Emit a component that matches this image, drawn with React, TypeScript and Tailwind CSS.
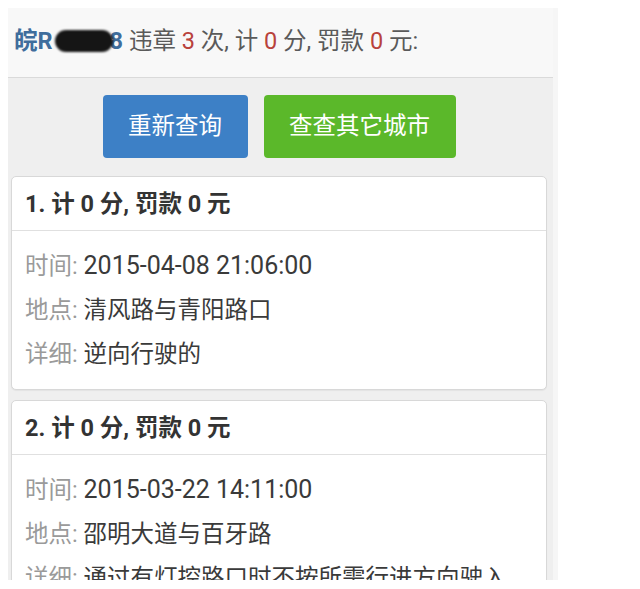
import React from "react";

const cjk = "font-['Roboto','Noto_Sans_CJK_SC',sans-serif]";

const records = [
  {
    no: 1,
    time: "2015-04-08 21:06:00",
    place: "清风路与青阳路口",
    detail: "逆向行驶的",
  },
  {
    no: 2,
    time: "2015-03-22 14:11:00",
    place: "邵明大道与百牙路",
    detail: "通过有灯控路口时不按所需行进方向驶入导向车道的",
  },
];

function Red({ children }: { children: React.ReactNode }) {
  return <span className="text-[#b8423c]">{children}</span>;
}

function Row({ label, children }: { label: string; children: React.ReactNode }) {
  return (
    <div className="flex leading-[44px]">
      <span className="shrink-0 whitespace-pre text-[#9a9a9a]">{label}: </span>
      <span className="text-[#3a3a3a]">{children}</span>
    </div>
  );
}

export default function App() {
  return (
    <div className={`w-[640px] h-[589px] bg-white pt-2 pl-2 ${cjk}`}>
      <div className="w-[550px] h-[572px] overflow-hidden bg-[#efefef] border-r-[5px] border-[#f6f6f6]">
        {/* 顶部车牌信息 */}
        <div className="h-[70px] leading-[66px] bg-[#f8f8f8] border-b border-[#dadada] pl-[6px] text-[23.5px] text-[#5a5a5a] whitespace-pre">
          <span className="font-bold text-[#3f6d9c]">皖R</span>
          <span className="inline-block align-middle w-[58px] h-[22px] ml-[2px] -mt-[3px] rounded-full bg-[#151515] blur-[1px]"></span>
          <span className="font-bold text-[#3f6d9c] -ml-[3px]">8</span>
          {" 违章 "}
          <Red>3</Red>
          {" 次, 计 "}
          <Red>0</Red>
          {" 分, 罚款 "}
          <Red>0</Red>
          {" 元:"}
        </div>

        <div className="pl-[3px] pr-[6px]">
          <div className="flex justify-center gap-4 pt-[17px]">
            <button className="w-[145px] h-[63px] rounded-[4px] bg-[#3d80c6] text-white text-[23.5px]">
              重新查询
            </button>
            <button className="w-[192px] h-[63px] rounded-[4px] bg-[#5bb82a] text-white text-[23.5px]">
              查查其它城市
            </button>
          </div>

          <div className="mt-[18px] flex flex-col gap-[10px]">
            {records.map((item) => (
              <div
                key={item.no}
                className="bg-white border border-[#d8d8d8] rounded-[5px] shadow-[0_1px_1px_rgba(0,0,0,0.05)] text-[23.5px]"
              >
                <div className="h-[54px] leading-[54px] px-[13px] border-b border-[#e0e0e0] font-bold text-[#333] whitespace-pre">
                  {`${item.no}. 计 0 分, 罚款 0 元`}
                </div>
                <div className="pl-[13px] pr-[18px] py-[13px]">
                  <Row label="时间">
                    <span className="text-[25px]">{item.time}</span>
                  </Row>
                  <Row label="地点">{item.place}</Row>
                  <Row label="详细">{item.detail}</Row>
                </div>
              </div>
            ))}
          </div>
        </div>
      </div>
    </div>
  );
}
